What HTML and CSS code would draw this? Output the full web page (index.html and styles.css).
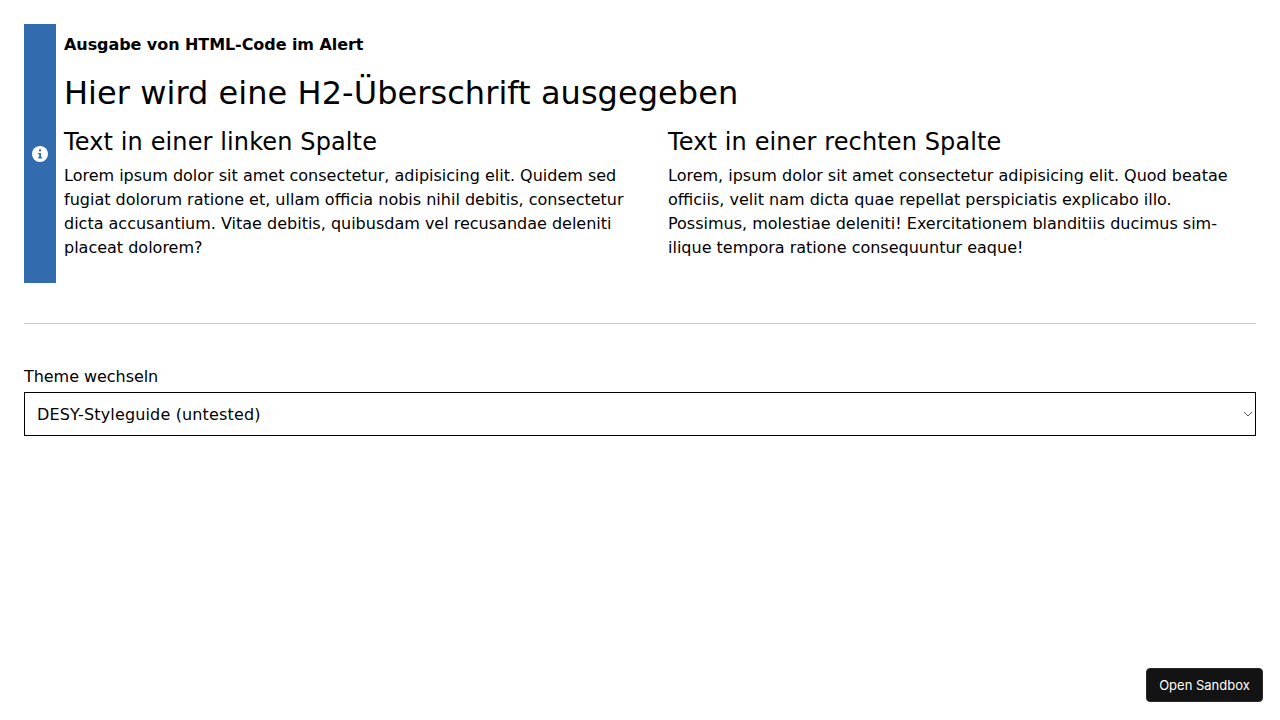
FILE: index.html
```html
<!DOCTYPE html>
<html lang="de">
<head>
<meta charset="utf-8">
<title>Alert</title>
<link rel="stylesheet" href="styles.css">
</head>
<body>
<main class="page">
  <section class="alert">
    <div class="alert-bar">
      <svg class="info-icon" viewBox="0 0 16 16" width="16" height="16"><circle cx="8" cy="8" r="8" fill="#fff"/><rect x="6.9" y="3.3" width="2.3" height="2.2" rx="1" fill="#326cae"/><path d="M6.2 7h2.9v4.2h1v1.3H6.2v-1.3h1V8.3h-1z" fill="#326cae"/></svg>
    </div>
    <div class="alert-body">
      <p class="alert-title">Ausgabe von HTML-Code im Alert</p>
      <h2 class="headline">Hier wird eine H2-Überschrift ausgegeben</h2>
      <div class="columns">
        <div>
          <h3 class="col-title">Text in einer linken Spalte</h3>
          <p class="col-text">Lorem ipsum dolor sit amet consectetur, adipisicing elit. Quidem sed<br>fugiat dolorum ratione et, ullam officia nobis nihil debitis, consectetur<br>dicta accusantium. Vitae debitis, quibusdam vel recusandae deleniti<br>placeat dolorem?</p>
        </div>
        <div>
          <h3 class="col-title">Text in einer rechten Spalte</h3>
          <p class="col-text">Lorem, ipsum dolor sit amet consectetur adipisicing elit. Quod beatae<br>officiis, velit nam dicta quae repellat perspiciatis explicabo illo.<br>Possimus, molestiae deleniti! Exercitationem blanditiis ducimus sim-<br>ilique tempora ratione consequuntur eaque!</p>
        </div>
      </div>
    </div>
  </section>
  <hr class="divider">
  <label class="theme-label" for="theme">Theme wechseln</label>
  <div class="select-wrap">
    <select class="select" id="theme"><option>DESY-Styleguide (untested)</option></select>
    <svg class="chevron" viewBox="0 0 10 6" width="10" height="6"><path d="M1 1l4 4 4-4" fill="none" stroke="#555" stroke-width="1"/></svg>
  </div>
</main>
<button class="sandbox">Open Sandbox</button>
</body>
</html>
```
FILE: styles.css
```css
html, body { margin: 0; padding: 0; height: 100%; background: #fff; }
body { font-family: "DejaVu Sans", Verdana, sans-serif; color: #000; overflow: hidden; }
.page { padding: 24px; }
.alert { display: flex; height: 259px; }
.alert-bar { width: 32px; background: #326cae; display: flex; align-items: center; justify-content: center; flex: none; }
.info-icon { display: block; }
.alert-body { flex: 1; padding-left: 8px; min-width: 0; }
.alert-title { margin: 11px 0 0; font-size: 16px; line-height: 20px; font-weight: 700; letter-spacing: -0.07px; }
.headline { margin: 14px 0 0; font-size: 32px; line-height: 48px; font-weight: 400; letter-spacing: 0.05px; }
.columns { display: grid; grid-template-columns: 1fr 1fr; column-gap: 16px; margin-top: 9px; }
.col-title { margin: 0; font-size: 24px; line-height: 32px; font-weight: 400; letter-spacing: 0.12px; }
.col-text { margin: 6px 0 0; font-size: 16px; line-height: 24px; }
.divider { border: 0; border-top: 1px solid #c8c8c8; margin: 40px 0 0; }
.theme-label { display: block; margin: 41px 0 3px; font-size: 16px; line-height: 24px; letter-spacing: -0.05px; }
.select-wrap { position: relative; }
.select { display: block; box-sizing: border-box; width: 100%; height: 44px; border: 1px solid #000; border-radius: 0; padding: 0 12px; font-family: inherit; font-size: 16px; letter-spacing: 0.15px; color: #000; background: #fff; appearance: none; }
.chevron { position: absolute; right: 3px; top: 19px; pointer-events: none; }
.sandbox { position: fixed; right: 17px; bottom: 18px; width: 117px; height: 34px; border: 1px solid #2a2a2a; border-radius: 4px; background: #131313; color: #fff; font-family: Inter, sans-serif; font-size: 13px; padding: 0; }
```
